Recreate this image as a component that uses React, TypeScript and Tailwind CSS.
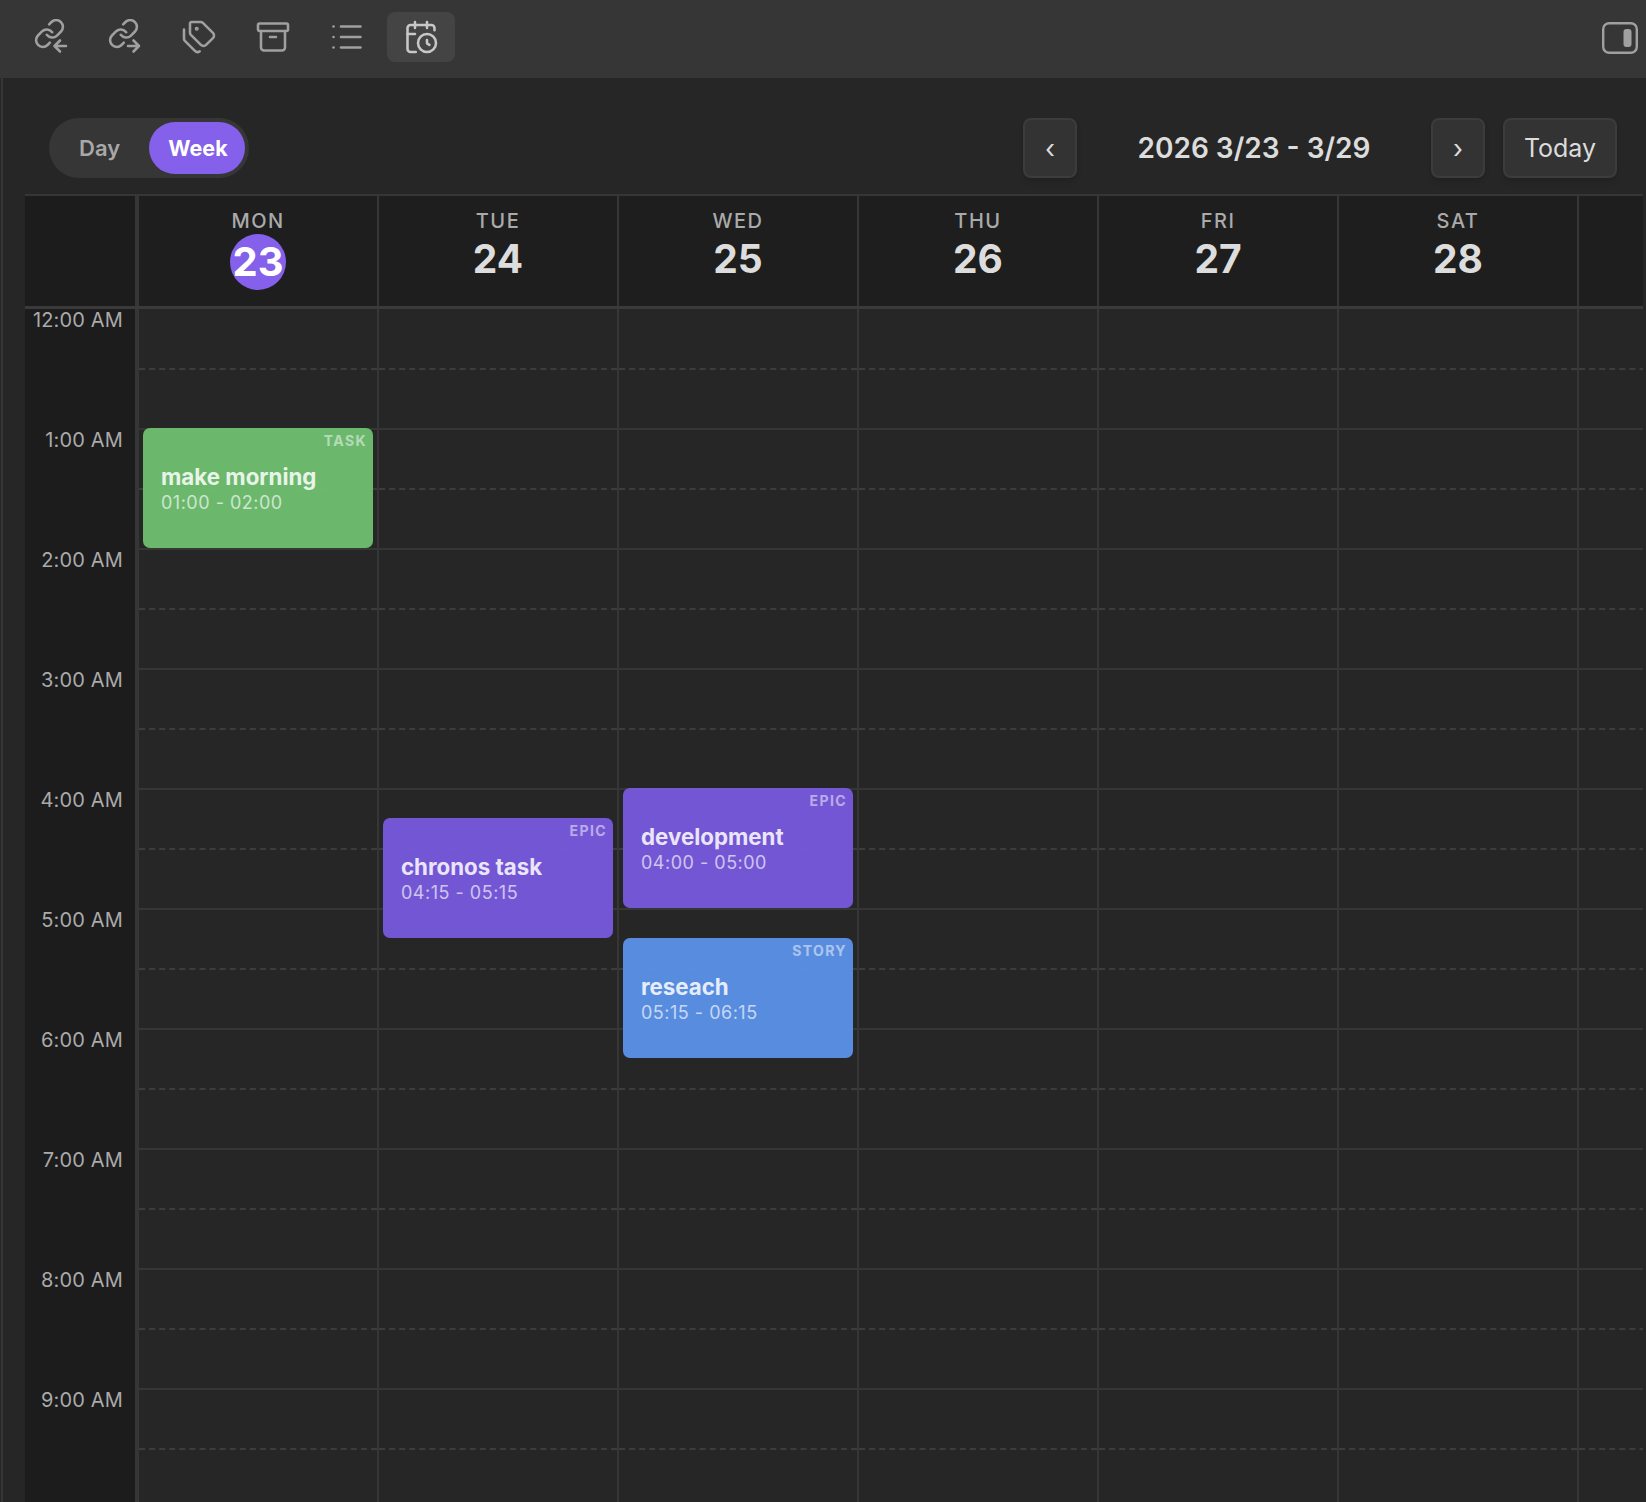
import { Archive, CalendarClock, List, Tags } from 'lucide-react';

interface CalendarEvent {
  title: string;
  time: string;
  tag: string;
  pos: string;
  color: string;
}

const days = [
  { name: 'MON', date: 23, events: [{ title: 'make morning', time: '01:00 - 02:00', tag: 'TASK', pos: 'top-[119px]', color: 'bg-[#6dbc6f]/98' }] },
  { name: 'TUE', date: 24, events: [{ title: 'chronos task', time: '04:15 - 05:15', tag: 'EPIC', pos: 'top-[509px]', color: 'bg-[#7558d8]/98' }] },
  {
    name: 'WED',
    date: 25,
    events: [
      { title: 'development', time: '04:00 - 05:00', tag: 'EPIC', pos: 'top-[479px]', color: 'bg-[#7558d8]/98' },
      { title: 'reseach', time: '05:15 - 06:15', tag: 'STORY', pos: 'top-[629px]', color: 'bg-[#5a8fe3]/98' },
    ],
  },
  { name: 'THU', date: 26, events: [] },
  { name: 'FRI', date: 27, events: [] },
  { name: 'SAT', date: 28, events: [] },
  { name: '', date: 0, events: [] },
];

const hours = ['12:00 AM', '1:00 AM', '2:00 AM', '3:00 AM', '4:00 AM', '5:00 AM', '6:00 AM', '7:00 AM', '8:00 AM', '9:00 AM'];

function LinkArrow({ direction }: { direction: 'in' | 'out' }) {
  return (
    <svg width="36" height="36" viewBox="0 0 36 36" fill="none" stroke="currentColor" strokeWidth="2.6" strokeLinecap="round" strokeLinejoin="round">
      <g transform="translate(0.3 -1.7) scale(1.35)" strokeWidth="1.9">
        <path d="M10 13a5 5 0 0 0 7.54.54l3-3a5 5 0 0 0-7.07-7.07l-1.72 1.71" />
        <path d="M14 11a5 5 0 0 0-7.54-.54l-3 3a5 5 0 0 0 7.07 7.07l1.71-1.71" />
      </g>
      {direction === 'in' ? <path d="M33 27H22M27 21.5L21.5 27l5.5 5.5" /> : <path d="M21 27H32M26.5 21.5L32 27l-5.5 5.5" />}
    </svg>
  );
}

function ToolbarButton({ active, children }: { active?: boolean; children: React.ReactNode }) {
  return (
    <button className={`flex h-[50px] w-[68px] items-center justify-center rounded-lg ${active ? 'bg-[#444444] text-[#c8c8c8]' : 'text-[#a0a0a0]'}`}>
      {children}
    </button>
  );
}

function EventCard({ event }: { event: CalendarEvent }) {
  return (
    <div className={`absolute left-[4px] h-[120px] w-[230px] rounded-[7px] px-[18px] pt-[35px] text-white ${event.pos} ${event.color}`}>
      <span className="absolute right-[6px] top-[4px] text-[14px] font-bold leading-[17px] tracking-[1.4px] opacity-50">{event.tag}</span>
      <div className="text-[22.3px] font-bold leading-[27px] opacity-85">{event.title}</div>
      <div className="text-[18px] leading-[26px] tracking-[0.5px] opacity-65">{event.time}</div>
    </div>
  );
}

export default function App() {
  return (
    <div className="flex h-[1502px] w-[1646px] flex-col overflow-hidden bg-[#262626] font-['Inter',sans-serif]">
      <div className="flex h-[78px] shrink-0 items-start justify-between bg-[#363636]">
        <div className="flex gap-[6px] pl-[17px] pt-3">
          <ToolbarButton><LinkArrow direction="in" /></ToolbarButton>
          <ToolbarButton><LinkArrow direction="out" /></ToolbarButton>
          <ToolbarButton><Tags size={36} strokeWidth={1.7} /></ToolbarButton>
          <ToolbarButton><Archive size={36} strokeWidth={1.7} /></ToolbarButton>
          <ToolbarButton><List size={36} strokeWidth={1.7} /></ToolbarButton>
          <ToolbarButton active><CalendarClock size={36} strokeWidth={1.7} /></ToolbarButton>
        </div>
        <svg className="mr-2 mt-[22px] text-[#a0a0a0]" width="36" height="32" viewBox="0 0 36 32" fill="none">
          <rect x="1.2" y="1.2" width="33.6" height="29.6" rx="6" stroke="currentColor" strokeWidth="2.4" />
          <rect x="21.5" y="7" width="8" height="18" rx="3" fill="currentColor" />
        </svg>
      </div>

      <div className="ml-[1px] flex min-h-0 flex-1 flex-col border-l-2 border-[#363636] pl-[22px]">
        <div className="flex h-[116px] shrink-0 items-start justify-between pl-6 pr-[29px] pt-[40px]">
          <div className="flex h-[60px] w-[200px] items-center rounded-full bg-[#363636] pl-[30px] pr-1">
            <span className="flex-1 text-[22px] font-semibold text-[#a8a8a8]">Day</span>
            <span className="flex h-[52px] w-[96px] items-center justify-center rounded-full bg-[#8560ea] pl-[2px] text-[21.5px] font-bold text-white">Week</span>
          </div>
          <div className="flex items-center">
            <button className="h-[60px] w-[54px] rounded-lg border-2 border-[#3c3c3c] bg-[#333333] text-[26px] text-[#dcdcdc] shadow-md">‹</button>
            <span className="w-[354px] text-center text-[28px] font-semibold text-[#dcdcdc]">2026 3/23 - 3/29</span>
            <button className="h-[60px] w-[54px] rounded-lg border-2 border-[#3c3c3c] bg-[#333333] text-[26px] text-[#dcdcdc] shadow-md">›</button>
            <button className="ml-[18px] h-[60px] w-[114px] rounded-lg border-2 border-[#3c3c3c] bg-[#333333] pt-[2px] text-[25px] text-[#dcdcdc] shadow-md">Today</button>
          </div>
        </div>

        <div className="mr-[3px] flex min-h-0 flex-1 flex-col overflow-hidden border-t-2 border-[#363636]">
          <div className="flex h-[113px] shrink-0 border-b-[3px] border-[#3a3a3a] bg-[#1e1e1e]">
            <div className="w-[114px] shrink-0 border-r-4 border-[#363636] bg-[#1c1c1c]" />
            {days.map((day) => (
              <div key={day.name} className="flex w-[240px] shrink-0 flex-col items-center border-r-2 border-[#363636] pt-[13px]">
                <span className="text-[20px] font-medium leading-[24px] tracking-[1.5px] text-[#aaaaaa]">{day.name}</span>
                {day.date === 23 ? (
                  <span className="mt-px flex h-[56px] w-[56px] items-center justify-center rounded-full bg-[#8560ea] text-[40px] font-bold text-white">{day.date}</span>
                ) : (
                  day.date > 0 && <span className="mt-px text-[39px] font-bold leading-[50px] text-[#dddddd]">{day.date}</span>
                )}
              </div>
            ))}
          </div>

          <div className="flex min-h-0 flex-1">
            <div className="w-[114px] shrink-0 border-r-4 border-[#363636] bg-[#1c1c1c]">
              {hours.map((hour) => (
                <div key={hour} className="h-[120px] pr-[12px] text-right text-[20px] leading-[22px] tracking-[0.15px] text-[#aaaaaa]">{hour}</div>
              ))}
            </div>
            {days.map((day) => (
              <div key={day.name} className="relative w-[240px] shrink-0 border-r-2 border-[#363636] pt-px">
                {hours.map((hour) => (
                  <div key={hour} className="h-[120px] border-b-2 border-[#363636]">
                    <div className="h-[60px] border-b-2 border-dashed border-[#3c3c3c]" />
                  </div>
                ))}
                {day.events.map((event) => (
                  <EventCard key={event.title} event={event} />
                ))}
              </div>
            ))}
          </div>
        </div>
      </div>
    </div>
  );
}
